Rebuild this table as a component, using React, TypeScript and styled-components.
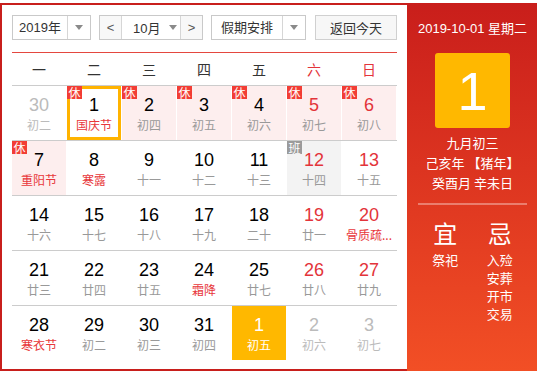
import React from "react";
import styled, { createGlobalStyle } from "styled-components";

const Global = createGlobalStyle`
  html, body { margin: 0; padding: 0; background: #fff; }
  body { font-family: "Liberation Sans", "Noto Sans CJK SC", Arial, sans-serif; }
  * { box-sizing: border-box; }
`;

const Widget = styled.div`
  margin-top: 3px;
  width: 537px;
  height: 368px;
  display: flex;
`;

const CalendarArea = styled.div`
  width: 407px;
  height: 368px;
  border: 2px solid #c81f1c;
  border-right: none;
  padding: 10px 10px 0 10px;
  display: flex;
  flex-direction: column;
`;

const Toolbar = styled.div`
  display: flex;
  gap: 8px;
  height: 25px;
  font-family: "Liberation Sans", "Noto Sans CJK SC", sans-serif;
  font-size: 13px;
  color: #333;
`;

const SelectBox = styled.div<{ $w: number }>`
  width: ${(p) => p.$w}px;
  height: 25px;
  border: 1px solid #c9c9c9;
  display: flex;
  background: #fff;
`;

const SelectText = styled.div`
  flex: 1;
  display: flex;
  align-items: center;
  justify-content: center;
  line-height: 23px;
`;

const Arrow = styled.div`
  width: 23px;
  border-left: 1px solid #d6d6d6;
  display: flex;
  align-items: center;
  justify-content: center;
  &::after {
    content: "";
    border-left: 4px solid transparent;
    border-right: 4px solid transparent;
    border-top: 5px solid #8a8a8a;
  }
`;

const MonthGroup = styled.div`
  height: 25px;
  border: 1px solid #c9c9c9;
  display: flex;
`;

const NavBtn = styled.div<{ $side: "l" | "r" }>`
  width: 22px;
  background: #f8f8f8;
  display: flex;
  align-items: center;
  justify-content: center;
  border-${(p) => (p.$side === "l" ? "right" : "left")}: 1px solid #d6d6d6;
  color: #555;
`;

const MonthSelect = styled.div`
  width: 58px;
  display: flex;
  align-items: center;
  padding-left: 11px;
  gap: 9px;
  &::after {
    content: "";
    border-left: 4px solid transparent;
    border-right: 4px solid transparent;
    border-top: 5px solid #8a8a8a;
  }
`;

const TodayBtn = styled.div`
  margin-left: auto;
  width: 82px;
  height: 25px;
  border: 1px solid #d0d0d0;
  background: #f7f7f7;
  display: flex;
  align-items: center;
  justify-content: center;
  font-family: "Noto Sans CJK SC", sans-serif;
`;

const WeekHeader = styled.div`
  margin-top: 12px;
  border-top: 1px solid #e4473f;
  height: 33px;
  display: grid;
  grid-template-columns: repeat(7, 54px);
  column-gap: 1px;
  align-items: center;
  font-family: "Noto Sans CJK SC", sans-serif;
  font-size: 14px;
`;

const WeekName = styled.div<{ $red?: boolean }>`
  text-align: center;
  color: ${(p) => (p.$red ? "#e3343a" : "#333")};
`;

const Row = styled.div`
  border-top: 1px solid #cccccc;
  height: 55px;
  display: grid;
  grid-template-columns: repeat(7, 54px);
  column-gap: 1px;
`;

type Kind = "normal" | "holiday" | "work" | "other" | "today" | "selected";

const Cell = styled.div<{ $kind: Kind }>`
  position: relative;
  height: 54px;
  text-align: center;
  padding-top: ${(p) => (p.$kind === "selected" ? 5 : 8)}px;
  background: ${(p) =>
    p.$kind === "holiday"
      ? "#fdeeee"
      : p.$kind === "work"
      ? "#f3f3f3"
      : p.$kind === "today"
      ? "#ffb800"
      : "#fff"};
  border: ${(p) => (p.$kind === "selected" ? "3px solid #ffb300" : "none")};
`;

const DayNum = styled.div<{ $c: string }>`
  font-family: "Liberation Sans", Arial, sans-serif;
  font-size: 18px;
  line-height: 22px;
  color: ${(p) => p.$c};
`;

const Lunar = styled.div<{ $c: string }>`
  font-family: "Noto Sans CJK SC", sans-serif;
  font-size: 12px;
  line-height: 16px;
  margin-top: 1px;
  padding: 0 4px;
  color: ${(p) => p.$c};
  white-space: nowrap;
  overflow: hidden;
`;

const Badge = styled.div<{ $gray?: boolean }>`
  position: absolute;
  left: ${(p) => (p.$gray ? 0 : 0)}px;
  top: 0;
  width: 15px;
  height: 13px;
  background: ${(p) => (p.$gray ? "#9b9b9b" : "#f23d35")};
  color: #fff;
  font-family: "Noto Sans CJK SC", sans-serif;
  font-size: 12px;
  line-height: 13px;
  text-align: center;
`;

const SelBadge = styled(Badge)`
  left: -3px;
  top: -3px;
`;

const Panel = styled.div`
  width: 130px;
  height: 368px;
  background: linear-gradient(180deg, #c91e1b 0%, #dc3420 45%, #f24f25 100%);
  color: #fff;
  padding: 17px 10px 0 11px;
  display: flex;
  flex-direction: column;
  align-items: center;
  font-family: "Liberation Sans", "Noto Sans CJK SC", sans-serif;
`;

const PanelDate = styled.div`
  font-size: 13px;
  line-height: 18px;
  white-space: nowrap;
`;

const BigDay = styled.div`
  margin-top: 15px;
  width: 75px;
  height: 75px;
  border-radius: 3px;
  background: #ffb800;
  display: flex;
  align-items: center;
  justify-content: center;
  font-family: "Liberation Sans", Arial, sans-serif;
  font-size: 54px;
  color: #fff;
`;

const LunarInfo = styled.div`
  margin-top: 5px;
  font-family: "Noto Sans CJK SC", sans-serif;
  font-size: 13px;
  line-height: 20px;
  text-align: center;
  white-space: nowrap;
`;

const Divider = styled.div`
  margin-top: 10px;
  width: 100%;
  height: 2px;
  background: rgba(255, 255, 255, 0.35);
`;

const YiJi = styled.div`
  width: 100%;
  display: grid;
  grid-template-columns: 1fr 1fr;
  margin-top: 13px;
  font-family: "Noto Sans CJK SC", sans-serif;
`;

const YiJiCol = styled.div`
  display: flex;
  flex-direction: column;
  align-items: center;
`;

const YiJiTitle = styled.div`
  font-size: 24px;
  line-height: 30px;
  margin-bottom: 3px;
`;

const YiJiItem = styled.div`
  font-size: 13px;
  line-height: 18px;
`;

type Day = {
  n: string;
  l: string;
  kind?: Kind;
  red?: boolean;
  lred?: boolean;
  badge?: "休" | "班";
};

const rows: Day[][] = [
  [
    { n: "30", l: "初二", kind: "other" },
    { n: "1", l: "国庆节", kind: "selected", lred: true, badge: "休" },
    { n: "2", l: "初四", kind: "holiday", badge: "休" },
    { n: "3", l: "初五", kind: "holiday", badge: "休" },
    { n: "4", l: "初六", kind: "holiday", badge: "休" },
    { n: "5", l: "初七", kind: "holiday", badge: "休", red: true },
    { n: "6", l: "初八", kind: "holiday", badge: "休", red: true },
  ],
  [
    { n: "7", l: "重阳节", kind: "holiday", badge: "休", lred: true },
    { n: "8", l: "寒露", lred: true },
    { n: "9", l: "十一" },
    { n: "10", l: "十二" },
    { n: "11", l: "十三" },
    { n: "12", l: "十四", kind: "work", badge: "班", red: true },
    { n: "13", l: "十五", red: true },
  ],
  [
    { n: "14", l: "十六" },
    { n: "15", l: "十七" },
    { n: "16", l: "十八" },
    { n: "17", l: "十九" },
    { n: "18", l: "二十" },
    { n: "19", l: "廿一", red: true },
    { n: "20", l: "骨质疏...", red: true, lred: true },
  ],
  [
    { n: "21", l: "廿三" },
    { n: "22", l: "廿四" },
    { n: "23", l: "廿五" },
    { n: "24", l: "霜降", lred: true },
    { n: "25", l: "廿七" },
    { n: "26", l: "廿八", red: true },
    { n: "27", l: "廿九", red: true },
  ],
  [
    { n: "28", l: "寒衣节", lred: true },
    { n: "29", l: "初二" },
    { n: "30", l: "初三" },
    { n: "31", l: "初四" },
    { n: "1", l: "初五", kind: "today" },
    { n: "2", l: "初六", kind: "other" },
    { n: "3", l: "初七", kind: "other" },
  ],
];

const weekNames = ["一", "二", "三", "四", "五", "六", "日"];

function numColor(d: Day) {
  if (d.kind === "other") return "#bbbbbb";
  if (d.kind === "today") return "#fff";
  if (d.red) return "#e3343a";
  return "#000";
}

function lunarColor(d: Day) {
  if (d.kind === "other") return "#bbbbbb";
  if (d.kind === "today") return "#fff";
  if (d.lred) return "#e8373b";
  return "#999";
}

export default function App() {
  return (
    <>
      <Global />
      <Widget>
        <CalendarArea>
          <Toolbar>
            <SelectBox $w={79}>
              <SelectText>2019年</SelectText>
              <Arrow />
            </SelectBox>
            <MonthGroup>
              <NavBtn $side="l">&lt;</NavBtn>
              <MonthSelect>10月</MonthSelect>
              <NavBtn $side="r">&gt;</NavBtn>
            </MonthGroup>
            <SelectBox $w={95}>
              <SelectText>假期安排</SelectText>
              <Arrow />
            </SelectBox>
            <TodayBtn>返回今天</TodayBtn>
          </Toolbar>
          <WeekHeader>
            {weekNames.map((w, i) => (
              <WeekName key={w} $red={i >= 5}>
                {w}
              </WeekName>
            ))}
          </WeekHeader>
          {rows.map((row, ri) => (
            <Row key={ri}>
              {row.map((d, ci) => {
                const kind = d.kind ?? "normal";
                return (
                  <Cell key={ci} $kind={kind}>
                    {d.badge &&
                      (kind === "selected" ? (
                        <SelBadge>{d.badge}</SelBadge>
                      ) : (
                        <Badge $gray={d.badge === "班"}>{d.badge}</Badge>
                      ))}
                    <DayNum $c={numColor(d)}>{d.n}</DayNum>
                    <Lunar $c={lunarColor(d)}>{d.l}</Lunar>
                  </Cell>
                );
              })}
            </Row>
          ))}
        </CalendarArea>
        <Panel>
          <PanelDate>2019-10-01 星期二</PanelDate>
          <BigDay>1</BigDay>
          <LunarInfo>
            <div>九月初三</div>
            <div>己亥年 【猪年】</div>
            <div>癸酉月 辛未日</div>
          </LunarInfo>
          <Divider />
          <YiJi>
            <YiJiCol>
              <YiJiTitle>宜</YiJiTitle>
              <YiJiItem>祭祀</YiJiItem>
            </YiJiCol>
            <YiJiCol>
              <YiJiTitle>忌</YiJiTitle>
              <YiJiItem>入殓</YiJiItem>
              <YiJiItem>安葬</YiJiItem>
              <YiJiItem>开市</YiJiItem>
              <YiJiItem>交易</YiJiItem>
            </YiJiCol>
          </YiJi>
        </Panel>
      </Widget>
    </>
  );
}
